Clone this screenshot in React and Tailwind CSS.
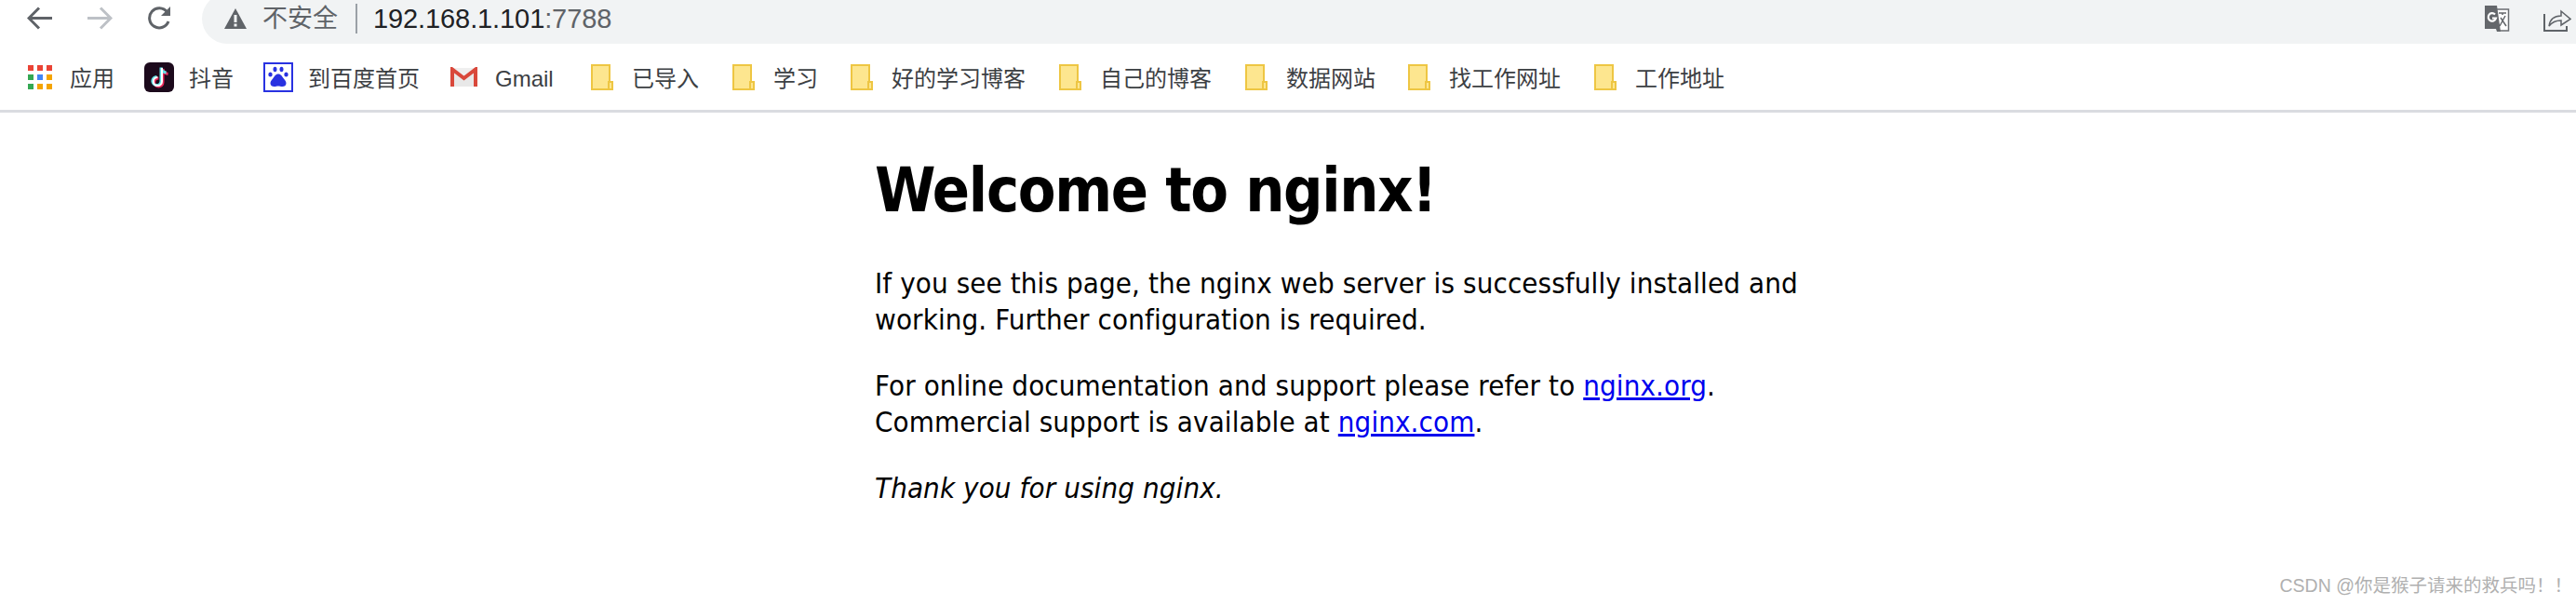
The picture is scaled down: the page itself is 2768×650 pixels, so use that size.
const bookmarks = [
  { label: "学习", gap: "ml-[39px]", width: "w-[45px]" },
  { label: "好的学习博客", gap: "ml-[38px]", width: "w-[144px]" },
  { label: "自己的博客", gap: "ml-[36px]", width: "w-[119px]" },
  { label: "数据网站", gap: "ml-[37px]", width: "w-[95px]" },
  { label: "找工作网址", gap: "ml-[36px]", width: "w-[120px]" },
  { label: "工作地址", gap: "ml-[36px]", width: "w-[95px]" },
];

function AppsIcon() {
  const colors = ["#ea4335", "#ea4335", "#ea4335", "#34a853", "#4285f4", "#f4a400", "#34a853", "#f4a400", "#f4a400"];
  return (
    <svg width="26" height="26" viewBox="0 0 26 26" className="shrink-0">
      {colors.map((color, i) => (
        <rect key={i} x={(i % 3) * 10} y={Math.floor(i / 3) * 10} width="6" height="6" fill={color} />
      ))}
    </svg>
  );
}

function TikTokIcon() {
  return (
    <svg width="32" height="32" viewBox="0 0 32 32" className="shrink-0">
      <rect width="32" height="32" rx="6" fill="#1c0a1c" />
      <path d="M19 6v14.500a4.600 4.600 0 1 1-4.600-4.600M19 6c.5 3.400 2.800 5.200 5.600 5.500" fill="none" stroke="#e8285a" strokeWidth="3" transform="translate(1 1)" />
      <path d="M19 6v14.500a4.600 4.600 0 1 1-4.600-4.600M19 6c.5 3.400 2.800 5.200 5.600 5.500" fill="none" stroke="#5fe0e6" strokeWidth="3" transform="translate(-1 -.5)" />
      <path d="M19 6v14.500a4.600 4.600 0 1 1-4.600-4.600" fill="none" stroke="#ffffff" strokeWidth="2" />
    </svg>
  );
}

function BaiduIcon() {
  return (
    <svg width="32" height="32" viewBox="0 0 32 32" className="shrink-0">
      <rect x="1" y="1" width="30" height="30" fill="#fff" stroke="#2932e1" strokeWidth="2" />
      <g fill="#2932e1">
        <ellipse cx="12.500" cy="7.500" rx="2" ry="2.800" />
        <ellipse cx="19.500" cy="7.500" rx="2" ry="2.800" />
        <ellipse cx="7.500" cy="13" rx="2.200" ry="2.600" />
        <ellipse cx="24.500" cy="13" rx="2.200" ry="2.600" />
        <path d="M16 12.500c3 0 4 2.500 5.500 4.500 1.700 2.200 3 3.500 3 5.500 0 2.500-2 3.500-4 3.500-2 0-3-.6-4.500-.6s-2.500.6-4.500.6c-2 0-4-1-4-3.500 0-2 1.300-3.300 3-5.500 1.500-2 2.500-4.500 5.500-4.500z" />
      </g>
    </svg>
  );
}

function GmailIcon() {
  return (
    <svg width="29" height="21" viewBox="0 0 29 21" className="shrink-0">
      <path d="M2 1h25v20H2z" fill="#efefef" />
      <path d="M4 21V4l10.500 8.500L25 4v17" fill="#e8e8e8" />
      <path d="M2 21V2.500L14.500 12 27 2.500V21" fill="none" stroke="#d9483b" strokeWidth="4" />
    </svg>
  );
}

function FolderIcon() {
  return (
    <svg width="24" height="28" viewBox="0 0 24 28" className="shrink-0">
      <path d="M1 1h19v26H1z" fill="#fde68f" stroke="#eec643" strokeWidth="2" />
      <path d="M19 19h4v8h-4z" fill="#fde68f" stroke="#eec643" strokeWidth="2" />
    </svg>
  );
}

function TranslateIcon() {
  return (
    <svg width="28" height="28" viewBox="0 0 28 28" className="shrink-0">
      <path d="M12 4h14.500v23H15" fill="#fff" stroke="#6b6e72" strokeWidth="1.500" />
      <path d="M1 0h13l4 28h-4l-1-3H1z" fill="#64676b" />
      <path d="M12 9.500a4.200 4.200 0 1 0 1 4H9" fill="none" stroke="#fff" strokeWidth="2.200" />
      <path d="M16 8h8M20 8v2M23 11l-6 11M18 13l6 9" fill="none" stroke="#64676b" strokeWidth="1.500" />
    </svg>
  );
}

function ShareIcon() {
  return (
    <svg width="30" height="28" viewBox="0 0 30 28" className="shrink-0 fill-none stroke-[#5f6368]">
      <path d="M1 9v18h24v-5" strokeWidth="2" />
      <path d="M6 22c1-7 5-11 13-11V6l10 8.500L19 21v-5c-6 0-10 2-13 6z" strokeWidth="1.500" />
    </svg>
  );
}

export default function App() {
  return (
    <div className="h-[650px] w-[2768px] overflow-hidden bg-white relative font-['Liberation_Sans','Noto_Sans_CJK_SC',sans-serif]">
      <div className="flex h-[47px] items-start">
        <div className="flex items-center pl-[29px] pt-[6px]">
          <svg width="27" height="25" viewBox="0 0 27 25" className="fill-none stroke-[#5f6368]" strokeWidth="3">
            <path d="M27 12.500H3M13 1.500 2 12.500l11 11" />
          </svg>
          <svg width="27" height="25" viewBox="0 0 27 25" className="ml-[38px] fill-none stroke-[#bdc1c6]" strokeWidth="3">
            <path d="M0 12.500h24M14 1.500l11 11-11 11" />
          </svg>
          <svg width="28" height="26" viewBox="0 0 28 26" className="ml-[37px]">
            <path d="M23 17a10.500 10.500 0 1 1-1.500-10" fill="none" stroke="#5f6368" strokeWidth="3" />
            <path d="M25 1v10H15z" fill="#5f6368" />
          </svg>
        </div>
        <div className="-mt-[7px] ml-[31px] flex h-[54px] flex-1 items-center rounded-l-[27px] bg-[#f1f3f4] pl-[24px] pr-[5px]">
          <svg width="24" height="22" viewBox="0 0 24 22" className="shrink-0">
            <path d="M12 0 24 22H0z" fill="#5f6368" />
            <path d="M10.500 7h3v8h-3zM10.500 16.500h3v3h-3z" fill="#f1f3f4" />
          </svg>
          <span className="ml-[17px] w-[83px] whitespace-nowrap text-[27px] text-[#5f6368]">不安全</span>
          <span className="ml-[17px] h-[32px] w-[2px] bg-[#9aa0a6]" />
          <span className="ml-[17px] whitespace-nowrap text-[29px] leading-none tracking-[-0.1px]">
            <span className="text-[#202124]">192.168.1.101</span>
            <span className="text-[#5f6368]">:7788</span>
          </span>
          <div className="ml-auto flex items-center gap-[36px]">
            <TranslateIcon />
            <ShareIcon />
          </div>
        </div>
      </div>

      <div className="flex h-[74px] items-center border-b-[3px] border-[#dadce0] pl-[30px] text-[24px] text-[#3c4043]">
        <AppsIcon />
        <span className="mt-[4px] ml-[19px] w-[47px] whitespace-nowrap">应用</span>
        <span className="ml-[33px] flex items-center">
          <TikTokIcon />
          <span className="mt-[4px] ml-[16px] w-[46px] whitespace-nowrap">抖音</span>
        </span>
        <span className="ml-[34px] flex items-center">
          <BaiduIcon />
          <span className="mt-[4px] ml-[16px] w-[119px] whitespace-nowrap">到百度首页</span>
        </span>
        <span className="ml-[34px] flex items-center">
          <GmailIcon />
          <span className="mt-[4px] ml-[19px] w-[64px] whitespace-nowrap">Gmail</span>
        </span>
        <span className="ml-[39px] flex items-center">
          <FolderIcon />
          <span className="mt-[4px] ml-[20px] w-[69px] whitespace-nowrap">已导入</span>
        </span>
        {bookmarks.map((item) => (
          <span key={item.label} className={"flex items-center " + item.gap}>
            <FolderIcon />
            <span className={"mt-[4px] ml-[20px] whitespace-nowrap " + item.width}>{item.label}</span>
          </span>
        ))}
      </div>

      <main className="ml-[940px] w-[1010px] pt-[45px] font-['DejaVu_Sans_Condensed','DejaVu_Sans',sans-serif] text-[31px] leading-[39px] tracking-[0.1px] text-black">
        <h1 className="text-[66px] leading-[78px] font-bold tracking-[-1.3px]">Welcome to nginx!</h1>
        <p className="mt-[41px]">
          If you see this page, the nginx web server is successfully installed and working. Further configuration is required.
        </p>
        <p className="mt-[32px]">
          For online documentation and support please refer to <a href="#" className="text-[#0000ee] underline">nginx.org</a>.
          <br />
          Commercial support is available at <a href="#" className="text-[#0000ee] underline">nginx.com</a>.
        </p>
        <p className="mt-[32px] italic">Thank you for using nginx.</p>
      </main>

      <div className="absolute right-[4px] bottom-[11px] whitespace-nowrap text-[19.5px] leading-none text-[#b0b0b0]">
        CSDN @你是猴子请来的救兵吗！！
      </div>
    </div>
  );
}
